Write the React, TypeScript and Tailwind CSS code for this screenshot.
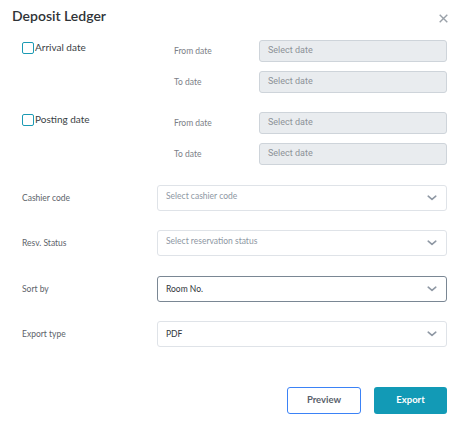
import React from "react";

const Chevron = () => (
  <svg width="10" height="6" viewBox="0 0 10 6" fill="none" className="shrink-0">
    <path d="M1.2 1.2l3.8 3.2 3.8-3.2" stroke="#8f98a4" strokeWidth="1.6" strokeLinecap="round" strokeLinejoin="round" />
  </svg>
);

const DateInput = () => (
  <div className="flex h-[22px] w-[188px] items-center rounded-[3px] border border-[#ced4da] bg-[#e9ecef] px-2 font-['Roboto'] text-[9px] text-[#8d9298]">
    Select date
  </div>
);

const DateGroup = ({ label }: { label: string }) => (
  <div className="flex">
    <label className="flex w-[152px] items-start gap-px pt-[2px]">
      <span className="h-[12px] w-[12px] shrink-0 rounded-[2px] border border-[#1b9ab4] bg-white" />
      <span className="-mt-[1px] text-[10px] leading-[12px] text-[#3a3f45]">{label}</span>
    </label>
    <div className="flex flex-col gap-[9px]">
      {["From date", "To date"].map((t) => (
        <div key={t} className="flex items-center">
          <span className="w-[85px] text-[8.5px] text-[#7b8087]">{t}</span>
          <DateInput />
        </div>
      ))}
    </div>
  </div>
);

const SelectRow = ({
  label,
  value,
  placeholder,
  active,
}: {
  label: string;
  value: string;
  placeholder?: boolean;
  active?: boolean;
}) => (
  <div className="flex items-center">
    <span className="w-[135px] text-[8.5px] text-[#5d636a]">{label}</span>
    <div
      className={`flex h-[26px] w-[290px] items-center justify-between rounded-[3px] border bg-white pl-2 pr-[9px] text-[8.5px] ${
        active ? "border-[#7a8794]" : "border-[#dfe3e8]"
      }`}
    >
      <span className={placeholder ? "-mt-[3px] text-[#8e97a3]" : "text-[#30353b]"}>{value}</span>
      <Chevron />
    </div>
  </div>
);

export default function App() {
  return (
    <div className="h-[432px] w-[461px] bg-white font-['Lato',sans-serif]">
      <div className="flex items-start justify-between pl-3 pr-[13px] pt-[5px]">
        <h1 className="text-[14px] font-semibold text-[#2f3337]">Deposit Ledger</h1>
        <svg width="9" height="9" viewBox="0 0 9 9" className="mt-[9px]">
          <path d="M0.7 0.7l7.6 7.6M8.3 0.7L0.7 8.3" stroke="#9aa1a9" strokeWidth="1.4" />
        </svg>
      </div>

      <div className="flex flex-col pl-[22px] pr-[14px]">
        <div className="mt-[14px] flex flex-col gap-[19px]">
          <DateGroup label="Arrival date" />
          <DateGroup label="Posting date" />
        </div>

        <div className="mt-[20px] flex flex-col gap-[19px]">
          <SelectRow label="Cashier code" value="Select cashier code" placeholder />
          <SelectRow label="Resv. Status" value="Select reservation status" placeholder />
          <div className="mt-px">
            <SelectRow label="Sort by" value="Room No." active />
          </div>
          <SelectRow label="Export type" value="PDF" />
        </div>

        <div className="mt-[40px] flex justify-end gap-[13px]">
          <button className="h-[27px] w-[74px] rounded-[3px] border border-[#3b82f6] bg-white text-[9.5px] font-bold text-[#59616b]">
            Preview
          </button>
          <button className="h-[27px] w-[73px] rounded-[3px] bg-[#129ab6] text-[9.5px] font-bold text-white">
            Export
          </button>
        </div>
      </div>
    </div>
  );
}
